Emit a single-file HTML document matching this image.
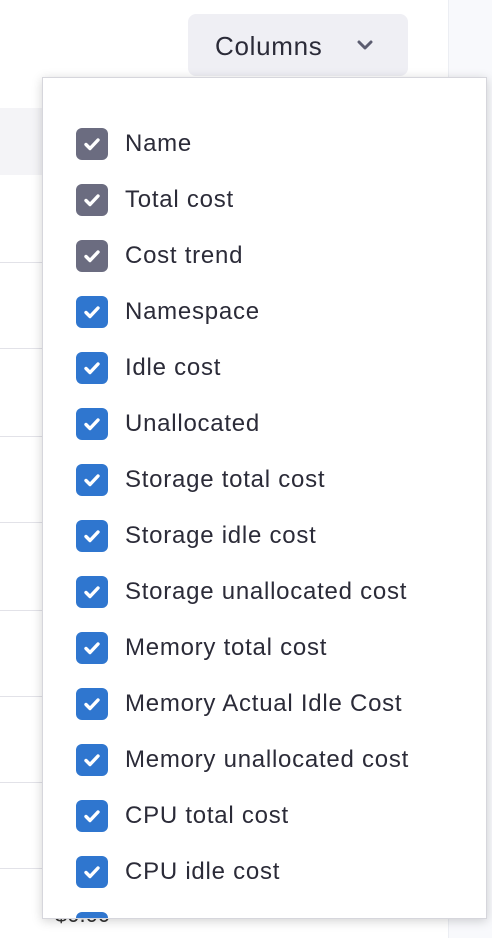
<!DOCTYPE html>
<html><head><style>
body{margin:0;width:492px;height:938px;overflow:hidden;background:#fff;font-family:"Liberation Sans",sans-serif;position:relative}
.strip{position:absolute;left:448px;top:0;width:44px;height:938px;background:#f8f9fc;border-left:1px solid #eceef3}
.hdr{position:absolute;left:0;top:108px;width:448px;height:67px;background:#f4f4f7}
.ln{position:absolute;left:0;width:448px;height:1px;background:#e2e2e8}
.btn{position:absolute;left:188px;top:14px;width:220px;height:62px;background:#efeff4;border-radius:8px;color:#2b2b38;font-size:26px;letter-spacing:.7px}
.btn span{position:absolute;left:27px;top:17px}
.menu{position:absolute;left:42px;top:77px;width:443px;height:840px;background:#fff;border:1px solid #d6d6dc;box-shadow:0 2px 10px rgba(0,0,0,.18);overflow:hidden}
.row{position:absolute;left:33px;height:32px}
.cb{position:absolute;left:0;top:0;width:32px;height:32px;border-radius:6px;background:#2f76cf}
.cb.g{background:#6b6c80}
.row .t{position:absolute;left:49px;top:2px;font-size:24px;color:#2b2b38;white-space:nowrap;letter-spacing:.75px}
.price{position:absolute;left:55px;top:902px;font-size:22px;color:#333}
</style></head><body>
<div class="strip"></div>
<div class="hdr"></div>
<div class="ln" style="top:262px"></div><div class="ln" style="top:348px"></div><div class="ln" style="top:436px"></div><div class="ln" style="top:522px"></div><div class="ln" style="top:610px"></div><div class="ln" style="top:696px"></div><div class="ln" style="top:782px"></div><div class="ln" style="top:868px"></div>
<div class="price">$0.00</div>
<div class="btn"><span>Columns</span><svg style="position:absolute;left:168px;top:26px" width="18" height="12" viewBox="0 0 18 12"><path d="M3 2l6 6 6-6" fill="none" stroke="#5c5d70" stroke-width="3" stroke-linecap="round" stroke-linejoin="round"/></svg></div>
<div class="menu" id="m"></div>
<script>
var items=["Name","Total cost","Cost trend","Namespace","Idle cost","Unallocated","Storage total cost","Storage idle cost","Storage unallocated cost","Memory total cost","Memory Actual Idle Cost","Memory unallocated cost","CPU total cost","CPU idle cost",""];
var h="";
items.forEach(function(t,i){
h+='<div class="row" style="top:'+(50+i*56)+'px"><div class="cb'+(i<3?' g':'')+'"><svg width="32" height="32" viewBox="0 0 32 32"><path d="M10 16.5l4 4 8-8.5" fill="none" stroke="#fff" stroke-width="3.4" stroke-linecap="round" stroke-linejoin="round"/></svg></div><div class="t">'+t+'</div></div>';
});
document.getElementById("m").innerHTML=h;
</script>
</body></html>
